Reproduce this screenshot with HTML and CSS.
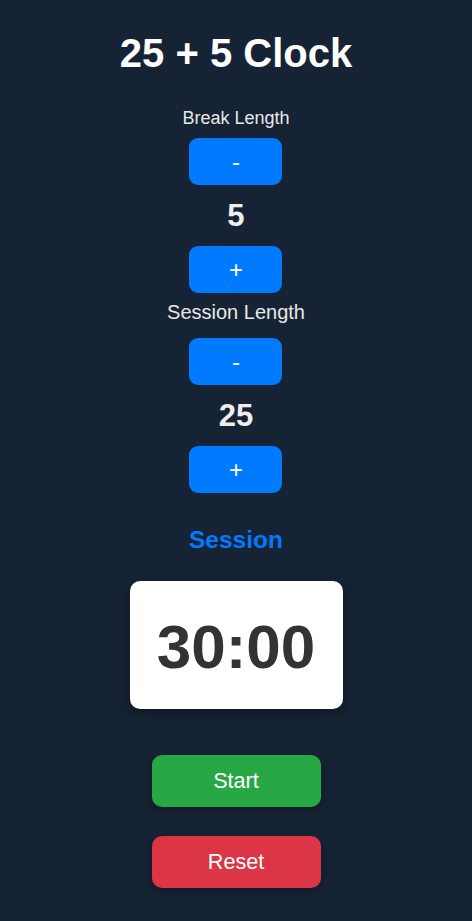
FILE: index.html
```html
<!DOCTYPE html>
<html lang="en">
<head>
<meta charset="utf-8">
<title>25 + 5 Clock</title>
<link rel="stylesheet" href="styles.css">
</head>
<body>
<main class="app">
  <h1 class="title">25 + 5 Clock</h1>
  <section class="control control-break">
    <div class="label label-break">Break Length</div>
    <button class="adj adj-first">-</button>
    <div class="value">5</div>
    <button class="adj">+</button>
  </section>
  <section class="control control-session">
    <div class="label label-session">Session Length</div>
    <button class="adj adj-first">-</button>
    <div class="value">25</div>
    <button class="adj">+</button>
  </section>
  <div class="mode">Session</div>
  <div class="timer">30:00</div>
  <div class="actions">
    <button class="btn btn-start">Start</button>
    <button class="btn btn-reset">Reset</button>
  </div>
</main>
</body>
</html>
```
FILE: styles.css
```css
html, body {
  margin: 0;
  padding: 0;
}
body {
  background: #162334;
  font-family: "Liberation Sans", Arial, sans-serif;
  color: #eeeeee;
  min-height: 921px;
}
.app {
  display: flex;
  flex-direction: column;
  align-items: center;
  padding-top: 31px;
}
.title {
  margin: 0;
  font-size: 40px;
  font-weight: bold;
  color: #ffffff;
}
.control {
  display: flex;
  flex-direction: column;
  align-items: center;
}
.control-break {
  margin-top: 32px;
}
.control-session {
  margin-top: 8px;
}
.label {
  color: #e8e8e8;
}
.label-break {
  font-size: 18px;
}
.label-session {
  font-size: 20px;
}
.adj {
  width: 93px;
  height: 47px;
  border: none;
  border-radius: 9px;
  background: #007bff;
  color: #ffffff;
  font-family: "Liberation Sans", Arial, sans-serif;
  font-size: 24px;
  padding: 0;
  display: flex;
  align-items: center;
  justify-content: center;
}
.control-break .adj-first {
  margin-top: 9px;
}
.control-session .adj-first {
  margin-top: 14px;
}
.value {
  margin: 12px 0;
  font-size: 31px;
  line-height: 37px;
  font-weight: bold;
  color: #eeeeee;
}
.mode {
  margin-top: 33px;
  font-size: 24.5px;
  font-weight: bold;
  color: #007bff;
}
.timer {
  margin-top: 27px;
  width: 213px;
  height: 128px;
  box-sizing: border-box;
  padding-top: 30px;
  background: #ffffff;
  border-radius: 10px;
  box-shadow: 0 4px 12px rgba(0, 0, 0, 0.35);
  text-align: center;
  font-size: 62px;
  font-weight: bold;
  color: #333333;
}
.actions {
  display: flex;
  flex-direction: column;
  align-items: center;
  gap: 29px;
  margin-top: 46px;
}
.btn {
  width: 169px;
  height: 52px;
  border: none;
  border-radius: 10px;
  color: #ffffff;
  font-family: "Liberation Sans", Arial, sans-serif;
  font-size: 21.6px;
  padding: 0;
  box-shadow: 0 3px 10px rgba(0, 0, 0, 0.3);
}
.btn-start {
  background: #28a745;
}
.btn-reset {
  background: #dc3545;
}
```
